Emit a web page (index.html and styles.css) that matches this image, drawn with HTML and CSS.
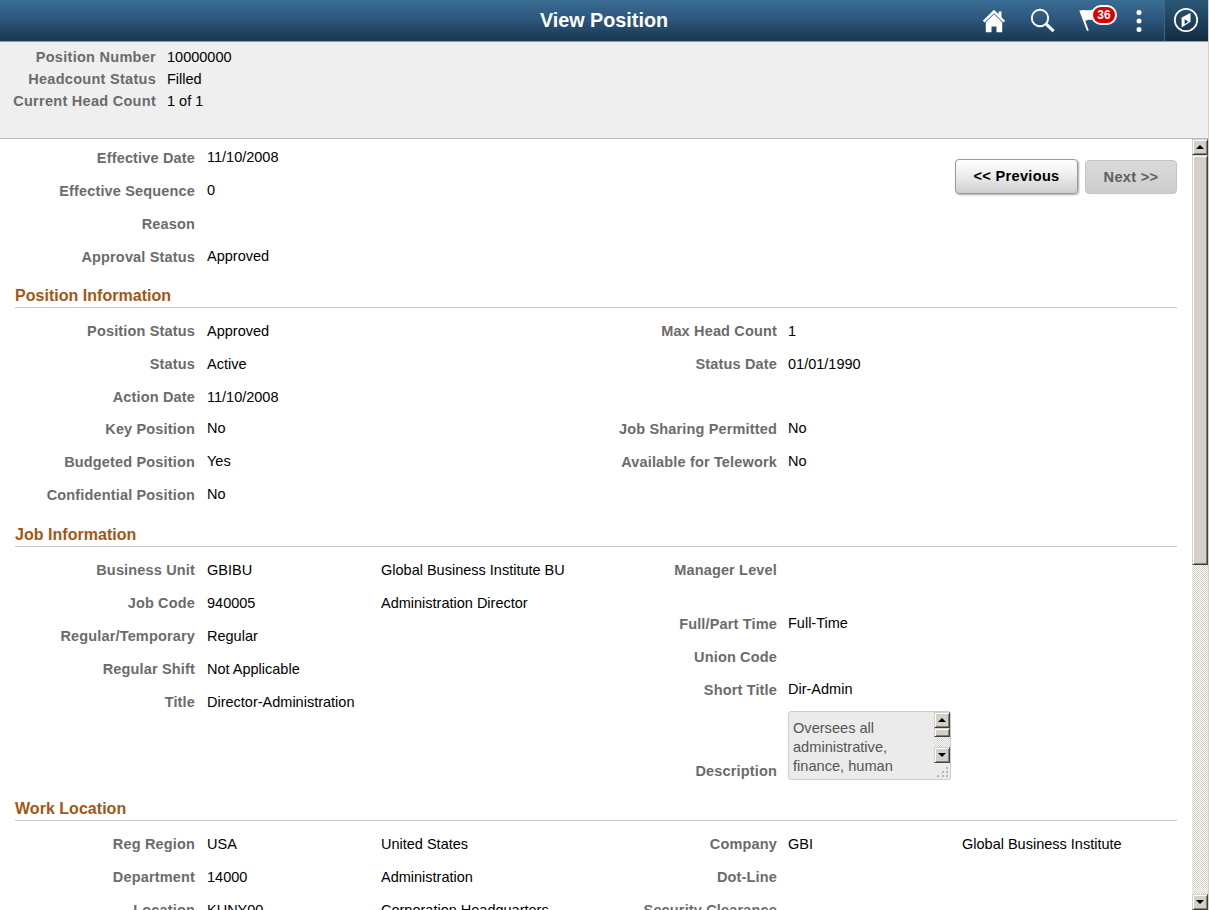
FILE: index.html
```html
<!DOCTYPE html>
<html lang="en">
<head>
<meta charset="utf-8">
<title>View Position</title>
<link rel="stylesheet" href="styles.css">
</head>
<body>
<div class="page">
<header class="banner">
  <h1 class="banner-title">View Position</h1>
  <nav class="tools">
    <svg class="tool home" width="24" height="24" viewBox="0 0 24 24"><path d="M12 .8 .8 11.800l1.700 1.700L12 4.300l9.500 9.200 1.700-1.700-3.700-3.600V2.500h-3v2.700z" fill="#fff"/><path d="M12 5.300 3.800 13.200V23.200h5.700v-5.700h5v5.700h5.700V13.200z" fill="#fff"/></svg>
    <svg class="tool search" width="26" height="26" viewBox="0 0 26 26"><circle cx="10" cy="10" r="8.200" fill="none" stroke="#fff" stroke-width="1.900"/><path d="M16.200 16.200 23.600 23.200" stroke="#fff" stroke-width="3.200"/></svg>
    <div class="alerts">
      <svg width="20" height="23" viewBox="0 0 20 23"><path d="M.3 1.800C5-.5 8 2.500 15 .5l3 8.500C14 12.500 10 9 6.300 12L9.800 21.500l-1.800.6z" fill="#fff"/></svg>
      <span class="badge">36</span>
    </div>
    <svg class="tool dots" width="8" height="24" viewBox="0 0 8 24"><g fill="#fff"><circle cx="4" cy="3.500" r="2.500"/><circle cx="4" cy="12" r="2.500"/><circle cx="4" cy="20.500" r="2.500"/></g></svg>
    <div class="compass"><svg width="26" height="26" viewBox="0 0 26 26"><circle cx="13" cy="13" r="11.200" fill="none" stroke="#fff" stroke-width="1.700"/><path d="M17.500 6V14.800L8.600 20.500V10.500z" fill="#fff"/><path d="M11.600 12.200v5l3.800-2.500z" fill="#1d3f5b"/></svg></div>
  </nav>
</header>
<section class="summary">
  <div class="srow"><b>Position Number</b><span>10000000</span></div>
  <div class="srow"><b>Headcount Status</b><span>Filled</span></div>
  <div class="srow"><b>Current Head Count</b><span>1 of 1</span></div>
</section>
<div class="body">
<main class="content">
  <section class="intro">
    <div class="col">
      <div class="row up"><b>Effective Date</b><span>11/10/2008</span></div>
      <div class="row up"><b>Effective Sequence</b><span>0</span></div>
      <div class="row"><b>Reason</b></div>
      <div class="row up"><b>Approval Status</b><span>Approved</span></div>
    </div>
    <div class="buttons">
      <button class="btn prev">&lt;&lt; Previous</button>
      <button class="btn next" disabled>Next &gt;&gt;</button>
    </div>
  </section>
  <h2>Position Information</h2>
  <section class="cols">
    <div class="col">
      <div class="row"><b>Position Status</b><span>Approved</span></div>
      <div class="row"><b>Status</b><span>Active</span></div>
      <div class="row short"><b>Action Date</b><span>11/10/2008</span></div>
      <div class="row up"><b>Key Position</b><span>No</span></div>
      <div class="row up"><b>Budgeted Position</b><span>Yes</span></div>
      <div class="row up"><b>Confidential Position</b><span>No</span></div>
    </div>
    <div class="col">
      <div class="row"><b>Max Head Count</b><span>1</span></div>
      <div class="row"><b>Status Date</b><span>01/01/1990</span></div>
      <div class="row short"></div>
      <div class="row up"><b>Job Sharing Permitted</b><span>No</span></div>
      <div class="row up"><b>Available for Telework</b><span>No</span></div>
    </div>
  </section>
  <h2>Job Information</h2>
  <section class="cols job">
    <div class="col">
      <div class="row"><b>Business Unit</b><span>GBIBU</span><span>Global Business Institute BU</span></div>
      <div class="row"><b>Job Code</b><span>940005</span><span>Administration Director</span></div>
      <div class="row"><b>Regular/Temporary</b><span>Regular</span></div>
      <div class="row"><b>Regular Shift</b><span>Not Applicable</span></div>
      <div class="row"><b>Title</b><span>Director-Administration</span></div>
    </div>
    <div class="col">
      <div class="row tall"><b>Manager Level</b></div>
      <div class="row up"><b>Full/Part Time</b><span>Full-Time</span></div>
      <div class="row"><b>Union Code</b></div>
      <div class="row up"><b>Short Title</b><span>Dir-Admin</span></div>
      <div class="row desc"><b>Description</b>
        <div class="memo">
          <div class="memo-text">Oversees all<br>administrative,<br>finance, human</div>
          <div class="bar small"><i class="arrow"></i><i class="thumb"></i><i class="track"></i><i class="arrow down"></i></div>
          <svg class="grip" width="13" height="12" viewBox="0 0 13 12"><path d="M9 0h2v2H9zM5 4h2v2H5zM9 4h2v2H9zM0 8h2v2H0zM5 8h2v2H5zM9 8h2v2H9z" fill="#b4b4b4"/></svg>
        </div>
      </div>
    </div>
  </section>
  <h2>Work Location</h2>
  <section class="cols">
    <div class="col">
      <div class="row"><b>Reg Region</b><span>USA</span><span>United States</span></div>
      <div class="row"><b>Department</b><span>14000</span><span>Administration</span></div>
      <div class="row"><b>Location</b><span>KUNY00</span><span>Corporation Headquarters</span></div>
    </div>
    <div class="col">
      <div class="row"><b>Company</b><span>GBI</span><span>Global Business Institute</span></div>
      <div class="row"><b>Dot-Line</b></div>
      <div class="row"><b>Security Clearance</b></div>
    </div>
  </section>
</main>
<div class="bar"><i class="arrow"></i><i class="thumb"></i><i class="track"></i><i class="arrow down"></i></div>
</div>
</div>
</body>
</html>
```
FILE: styles.css
```css
* { box-sizing: border-box; }
body { margin: 0; font-family: "Liberation Sans", Arial, sans-serif; font-size: 14.5px; color: #000; }
.page { width: 1209px; height: 910px; overflow: hidden; display: flex; flex-direction: column; border-right: 1px solid #d4d0c8; background: #fff; }
.banner { flex: none; height: 42px; display: grid; grid-template-columns: 240px 1fr 240px; background: linear-gradient(#3a6d94, #2c557a 50%, #193750); border-bottom: 1px solid #7ea2c4; }
.banner-title { grid-column: 2; margin: 0; text-align: center; font-size: 19.8px; line-height: 40px; color: #fff; }
.tools { display: flex; align-items: center; }
.tool { flex: none; }
.home { margin-left: 14px; }
.search { margin-left: 24px; }
.alerts { position: relative; margin-left: 23px; width: 38px; height: 23px; }
.alerts svg { display: block; }
.badge { position: absolute; left: 12px; top: -4px; width: 26px; height: 20px; border: 2px solid #fff; border-radius: 10px; background: #dc0000; color: #fff; font-size: 12px; font-weight: bold; line-height: 17px; text-align: center; }
.dots { margin-left: 18px; }
.compass { margin-left: auto; width: 44px; height: 41px; padding: 0 1px 1px 0; border-left: 1px solid #3d6482; background: linear-gradient(#2b5878, #132d42); display: flex; align-items: center; justify-content: center; }
.summary { flex: none; height: 97px; padding-top: 4px; background: #efefef; border-bottom: 1px solid #bbb; }
.srow { display: grid; grid-template-columns: 156px auto; column-gap: 11px; line-height: 22px; }
b { color: #6b6b6b; font-size: 14.5px; letter-spacing: .16px; text-align: right; white-space: nowrap; }
.srow b { letter-spacing: .28px; }
.body { flex: 1; min-height: 0; display: flex; }
.content { flex: 1; overflow: hidden; padding: 0 15px; }
.intro { display: flex; justify-content: space-between; height: 133px; padding-top: 3px; }
.buttons { display: flex; gap: 7px; padding-top: 17px; }
.btn { font: bold 14.6px "Liberation Sans", Arial, sans-serif; letter-spacing: .3px; padding: 0; border-radius: 4px; }
.prev { width: 123px; height: 35px; padding-bottom: 2px; border: 1px solid #999; background: linear-gradient(#fff, #f0f0f0 40%, #cfcfcf); box-shadow: 1px 1px 2px #aaa; color: #000; }
.next { width: 92px; height: 34px; margin-top: 1px; border: 1px solid #c4c4c4; background: linear-gradient(#dadada, #cdcdcd); color: #5f5f5f; }
h2 { margin: 0; height: 36px; padding-top: 12px; line-height: 23px; border-bottom: 1px solid #c8c8c8; color: #a35614; font-size: 16px; letter-spacing: .03px; }
.cols { display: grid; grid-template-columns: 581px 581px; height: 203px; padding-top: 7px; }
.job { height: 238px; }
.col + .col b { margin-right: -1px; }
.row { display: grid; grid-template-columns: 180px 162px auto; column-gap: 12px; height: 33px; line-height: 33px; white-space: nowrap; }
.up span { margin-top: -1px; }
.short { height: 32px; }
.tall { height: 54px; }
.desc { height: 79px; }
.desc > b { padding-top: 48px; }
.memo { display: flex; position: relative; justify-content: space-between; width: 163px; height: 69px; margin-top: 4px; background: #ebebeb; border: 1px solid #ccc; border-radius: 3px; }
.memo-text { padding: 7px 0 0 4px; line-height: 19px; color: #555; height: 64px; overflow: hidden; font-size: 14.6px; }
.grip { position: absolute; right: 0; bottom: 0; }
.bar { flex: none; width: 16px; display: flex; flex-direction: column; background: repeating-conic-gradient(#d4d0c8 0 25%, #fff 0 50%) 0 0 / 2px 2px; }
.arrow, .thumb { background: #d4d0c8; border: 1px solid; border-color: #d4d0c8 #404040 #404040 #d4d0c8; box-shadow: inset 1px 1px #fff, inset -1px -1px #808080; }
.arrow { height: 16px; display: grid; place-items: center; }
.arrow::before { content: ""; border: 4px solid transparent; border-top: 0; border-bottom: 4px solid #000; }
.down::before { border-top: 4px solid #000; border-bottom: 0; }
.thumb { height: 410px; }
.track { flex: 1; }
.small { height: 51px; }
.small .thumb { height: 9px; }
```
